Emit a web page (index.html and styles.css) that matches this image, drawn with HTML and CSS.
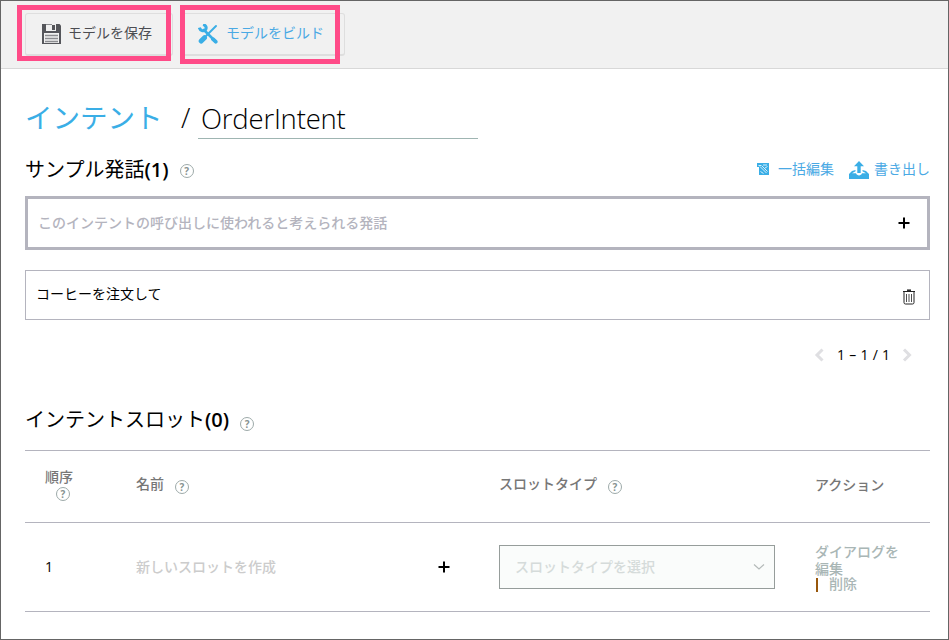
FILE: index.html
```html
<!DOCTYPE html>
<html lang="ja">
<head>
<meta charset="utf-8">
<title>OrderIntent</title>
<link rel="stylesheet" href="styles.css">
</head>
<body>
<div class="window">
  <header class="toolbar">
    <div class="slot slot-save">
      <button class="btn btn-save">
        <svg width="19" height="20" viewBox="0 0 19 20"><path fill="#55565b" d="M0 0h17.500l1.500 1.500V20H0z"/><path fill="#f1f1f1" d="M4 0h10v7H4zM2 9h15v10H2z"/><path fill="#8b8c90" d="M4 0h6v1H4z"/><path fill="#55565b" d="M10 1h3v5h-3z"/><path stroke="#8b8c90" stroke-width="1.300" d="M3 11.500h13M3 14.500h13M3 17.500h13"/></svg>
        <span>モデルを保存</span>
      </button>
      <div class="mark"></div>
    </div>
    <div class="slot slot-build">
      <button class="btn btn-build">
        <svg width="20" height="20" viewBox="0 0 20 20" fill="none" stroke="#3aaee6" stroke-linecap="round"><path stroke-width="2.600" d="M6 6l11 11"/><path stroke-width="3.800" d="M15 15.200l2.700 2.500"/><path stroke-width="3" stroke-linecap="butt" d="M1.300 3.700c.7 3 4.300 3.900 6 2.200s.8-4.600-2.200-5.400"/><path stroke-width="2" d="M18 2L8 12"/><path stroke-width="5" d="M6.500 13.700L3.200 17"/></svg>
        <span>モデルをビルド</span>
      </button>
      <div class="mark"></div>
    </div>
  </header>
  <main>
    <h1 class="title"><a>インテント</a><span class="slash">/</span><span class="name">OrderIntent</span></h1>
    <div class="section">
      <h2>サンプル発話<b>(1)</b></h2><i class="help">?</i>
      <div class="links">
        <a class="bulk"><svg width="13" height="12" viewBox="0 0 13 12"><path fill="#3aaee6" d="M0 0h12v12H2V4H0z"/><path stroke="#fff" stroke-width=".8" fill="none" d="M1.500 2.500h3M6 2h4M8 5l2.500-1.500M3.500 8.500l3 2M3 3.500l6.500 6.500M5 3l5.500 5.500"/></svg>一括編集</a>
        <a class="export"><svg width="20" height="18" viewBox="0 0 20 18"><path fill="#3aaee6" d="M10 0l5 5.300h-3.300V12H8.300V5.300H5zM3 10L6.500 9v1.300l-3.500 2h4c.8 2.800 5.200 2.800 6 0h4l-3.500-2V9L17 10l3 3v5H0v-5z"/></svg>書き出し</a>
      </div>
    </div>
    <div class="field utter-input"><span>このインテントの呼び出しに使われると考えられる発話</span><svg class="plus" width="12" height="12" viewBox="0 0 12 12"><path d="M6 .5v11M.5 6h11"/></svg></div>
    <div class="field utter"><span>コーヒーを注文して</span>
      <svg class="trash" width="12" height="16" viewBox="0 0 12 16" fill="none" stroke="#222"><path stroke-width="1.500" d="M4 1.200h4"/><path d="M0 2.500h12M1 3v10.500q0 1.500 1.500 1.500h7q1.500 0 1.500-1.500V3"/><path stroke-width=".8" d="M3.500 5v8M6 5v8M8.500 5v8"/></svg>
    </div>
    <nav class="pager">
      <svg width="10" height="14" viewBox="0 0 10 14"><path d="M8.500 1.500L3 7l5.500 5.500"/></svg>
      <span>1 – 1 / 1</span>
      <svg width="10" height="14" viewBox="0 0 10 14"><path d="M2 1.500L7.500 7 2 12.500"/></svg>
    </nav>
    <div class="section slots-head"><h2>インテントスロット<b>(0)</b></h2><i class="help">?</i></div>
    <div class="grid head">
      <div class="order"><span>順序</span><i class="help">?</i></div>
      <div class="cell"><span>名前</span><i class="help">?</i></div>
      <div class="cell"><span>スロットタイプ</span><i class="help">?</i></div>
      <div class="cell last"><span>アクション</span></div>
    </div>
    <div class="grid row">
      <div class="num">1</div>
      <div class="new"><span>新しいスロットを作成</span><svg class="plus" width="12" height="12" viewBox="0 0 12 12"><path d="M6 .5v11M.5 6h11"/></svg></div>
      <div class="select"><span>スロットタイプを選択</span><svg width="12" height="8" viewBox="0 0 12 8"><path fill="none" stroke="#b4bab9" stroke-width="1.200" d="M1 1.500l5 4.500 5-4.500"/></svg></div>
      <div class="actions"><div>ダイアログを</div><div>編集</div><div class="delete">削除</div></div>
    </div>
  </main>
</div>
</body>
</html>
```
FILE: styles.css
```css
* { box-sizing: border-box; }
body { margin: 0; font: 14px/20px "Open Sans", "Noto Sans CJK JP", sans-serif; color: #000; }
svg { display: block; flex: none; }
.window { width: 949px; height: 640px; border: 1px solid #656565; background: #fff; overflow: hidden; }
.toolbar { height: 68px; background: #f1f1f1; border-bottom: 1px solid #d8d8d8; display: flex; padding: 12px 0 0 24px; }
.slot { position: relative; height: 43px; }
.slot-save { width: 148px; margin-right: 8px; }
.slot-build { width: 164px; }
.btn { width: 100%; height: 43px; display: flex; align-items: center; border: 1px solid #dedede; border-bottom-width: 2px; border-radius: 3px; background: #f1f1f1; font: inherit; padding: 0 0 1px 16px; color: #4c4d52; }
.btn span { margin: 0 0 1px 7px; }
.btn-build { color: #4aa9e4; padding-left: 16px; }
.btn-build span { margin-left: 8px; }
.mark { position: absolute; border: 5px solid #ff4b88; }
.slot-save .mark { left: -8px; top: -8px; width: 154px; height: 56px; }
.slot-build .mark { left: -1px; top: -8px; width: 160px; height: 59px; }
main { padding: 0 18px 0 24px; }
.title { margin: 0; padding-top: 29px; height: 80px; display: flex; font-size: 27.5px; line-height: 40px; font-weight: 400; }
.title a { color: #3aaee6; width: 156px; }
.slash { width: 17px; font-weight: 300; }
.name { width: 280px; height: 41px; padding-left: 3px; border-bottom: 1px solid #9fb5b2; font: 27.5px/41px "Open Sans", sans-serif; font-weight: 300; letter-spacing: -.2px; }
.section { display: flex; height: 47px; padding-top: 6px; }
h2 { margin: 0; font-size: 20px; line-height: 30px; font-weight: 400; }
h2 b { font-weight: 600; }
.help { width: 14px; height: 14px; border: 1px solid #9daaa9; border-radius: 50%; font: bold 10px/12px "Open Sans", sans-serif; text-align: center; color: #879291; flex: none; }
.section .help { margin: 9px 0 0 11px; }
.links { margin-left: auto; display: flex; color: #4aa9e4; height: 27px; }
.links a { display: flex; align-items: center; }
.bulk svg { margin-right: 8px; }
.export { margin-left: 15px; }
.export svg { margin: 2px 5px 0 0; }
.field { display: flex; align-items: center; justify-content: space-between; }
.utter-input { height: 54px; border: 3px solid #b4b4be; padding: 0 17px 0 10px; color: #b4b4be; font-weight: 500; }
.utter-input span { padding-bottom: 1px; }
.plus { fill: none; stroke: #000; stroke-width: 2; }
.utter { height: 50px; margin-top: 20px; border: 1px solid #b4b4be; padding: 0 14px 0 10px; }
.utter span { padding-bottom: 2px; }
.trash { margin-top: 4px; }
.pager { display: flex; align-items: center; justify-content: flex-end; height: 70px; padding-right: 18px; }
.pager span { width: 53px; margin: 0 12px 0 13px; letter-spacing: .3px; white-space: nowrap; }
.pager svg { fill: none; stroke: #dfdfe2; stroke-width: 3; }
.slots-head { height: 60px; padding-top: 15px; }
.slots-head .help { margin-top: 12px; }
.grid { display: grid; grid-template-columns: 111px 363px 316px 115px; border-top: 1px solid #b4b4be; }
.head { height: 72px; color: #777; font-weight: 500; }
.order { padding: 16px 0 0 20px; }
.order .help { display: block; margin: 0 0 0 11px; }
.cell { display: flex; padding-top: 23px; }
.cell.last { padding-top: 24px; }
.cell .help { margin: 6px 0 0 11px; }
.row { height: 90px; border-bottom: 1px solid #b4b4be; align-items: center; }
.num { padding-left: 20px; }
.new { display: flex; align-items: center; justify-content: space-between; color: #ccc; font-weight: 500; padding-right: 49px; }
.new span, .select span { padding-bottom: 1px; }
.select { width: 276px; height: 44px; border: 1px solid #969d9b; background: #fafcfb; display: flex; align-items: center; justify-content: space-between; padding: 0 9px 0 15px; color: #d5dbda; font-weight: 500; }
.actions { color: #a9b6b5; font-weight: 500; line-height: 17px; }
.delete { display: flex; align-items: center; line-height: 14px; }
.delete::before { content: ""; width: 2px; height: 14px; margin: 1px 11px 0 1px; background: #98570c; }
```
